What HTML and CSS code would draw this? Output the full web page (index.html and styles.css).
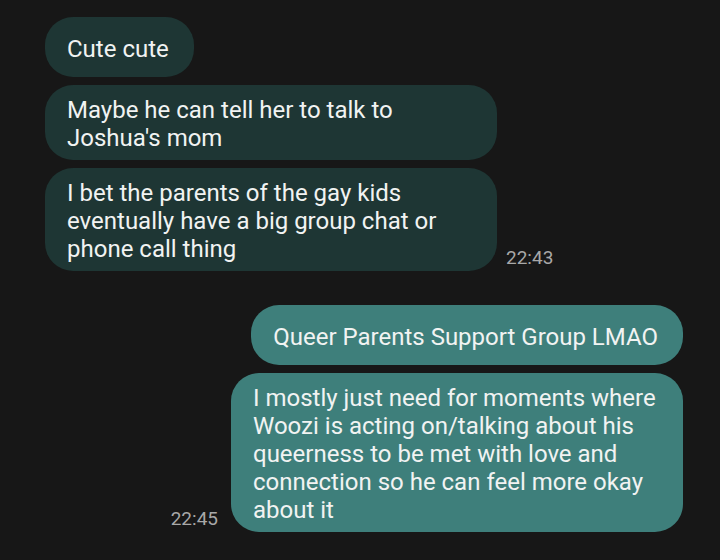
FILE: index.html
```html
<!DOCTYPE html>
<html lang="en">
<head>
    <meta charset="UTF-8">
    <meta name="viewport" content="width=device-width, initial-scale=1.0">
    <title>Chat</title>
    <link rel="stylesheet" href="styles.css">
</head>
<body>

<div class="chat">
    <div class="group incoming">
        <div class="msg">Cute cute</div>
        <div class="msg">Maybe he can tell her to talk to Joshua's mom</div>
        <div class="row">
            <div class="msg">I bet the parents of the gay kids eventually have a big group chat or phone call thing</div>
            <span class="time">22:43</span>
        </div>
    </div>

    <div class="group outgoing">
        <div class="msg">Queer Parents Support Group LMAO</div>
        <div class="row">
            <span class="time">22:45</span>
            <div class="msg">I mostly just need for moments where Woozi is acting on/talking about his queerness to be met with love and connection so he can feel more okay about it</div>
        </div>
    </div>
</div>

</body>
</html>
```

FILE: styles.css
```css
body {
    margin: 0;
    background-color: #171717;
    font-family: Roboto, "Liberation Sans", sans-serif;
    color: #f1f3f2;
}

.chat {
    display: flex;
    flex-direction: column;
    gap: 34px;
    padding: 17px 37px 0 45px;
}

.group {
    display: flex;
    flex-direction: column;
    gap: 8px;
}

.incoming {
    align-items: flex-start;
}

.outgoing {
    align-items: flex-end;
}

.row {
    display: flex;
    align-items: flex-end;
}

.incoming .row {
    gap: 9px;
}

.outgoing .row {
    gap: 13px;
}

.msg {
    box-sizing: border-box;
    max-width: 452px;
    min-height: 60px;
    display: flex;
    align-items: center;
    padding: 11px 25px 8px 22px;
    border-radius: 28px;
    font-size: 24px;
    line-height: 28px;
}

.incoming .msg {
    background-color: #1e3634;
}

.outgoing .msg {
    background-color: #3e7f7b;
}

.time {
    font-size: 19px;
    color: #a8a8a8;
    margin-bottom: 2px;
    white-space: nowrap;
}
```
